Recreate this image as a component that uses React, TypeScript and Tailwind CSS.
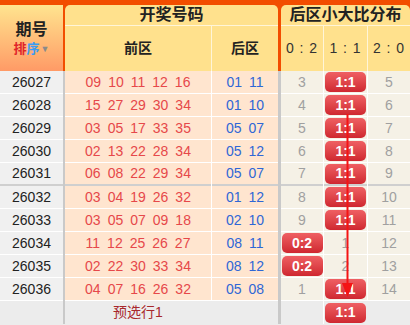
import React from 'react';

type Row = {
  issue: string;
  front: string[];
  back: string[];
  dist: (string | number)[];
};

const ROWS: Row[] = [
  { issue: '26027', front: ['09', '10', '11', '12', '16'], back: ['01', '11'], dist: [3, '1:1', 5] },
  { issue: '26028', front: ['15', '27', '29', '30', '34'], back: ['01', '10'], dist: [4, '1:1', 6] },
  { issue: '26029', front: ['03', '05', '17', '33', '35'], back: ['05', '07'], dist: [5, '1:1', 7] },
  { issue: '26030', front: ['02', '13', '22', '28', '34'], back: ['05', '12'], dist: [6, '1:1', 8] },
  { issue: '26031', front: ['06', '08', '22', '29', '34'], back: ['05', '07'], dist: [7, '1:1', 9] },
  { issue: '26032', front: ['03', '04', '19', '26', '32'], back: ['01', '12'], dist: [8, '1:1', 10] },
  { issue: '26033', front: ['03', '05', '07', '09', '18'], back: ['02', '10'], dist: [9, '1:1', 11] },
  { issue: '26034', front: ['11', '12', '25', '26', '27'], back: ['08', '11'], dist: ['0:2', 1, 12] },
  { issue: '26035', front: ['02', '22', '30', '33', '34'], back: ['08', '12'], dist: ['0:2', 2, 13] },
  { issue: '26036', front: ['04', '07', '16', '26', '32'], back: ['05', '08'], dist: [1, '1:1', 14] },
];

const Badge: React.FC<{ label: string }> = ({ label }) => (
  <div className="mx-auto flex h-[20px] w-[41px] items-center justify-center rounded-[5px] bg-linear-to-b from-[#ef5f63] to-[#cf2630] text-[14px] font-bold text-white">
    {label}
  </div>
);

const DistCell: React.FC<{ value: string | number; width: string; border: string }> = ({ value, width, border }) => (
  <div className={`${width} ${border} flex items-center justify-center bg-[#f5f1e6] text-[14px] text-[#a0a0a0]`}>
    {typeof value === 'string' ? <Badge label={value} /> : value}
  </div>
);

const App: React.FC = () => {
  return (
    <div
      className="relative h-[325px] w-[410px] overflow-hidden bg-[#ececec]"
      style={{ fontFamily: '"Liberation Sans", "Noto Sans CJK SC", sans-serif' }}
    >
      {/* header */}
      <div className="flex h-[71px] bg-[#f24d00] pt-[5px]">
        <div className="flex w-[63px] flex-col items-center justify-center bg-linear-to-b from-[#ffe48f] to-[#ff9a66] pt-[2px]">
          <div className="text-[16px] font-bold leading-[20px] text-[#222]">期号</div>
          <div className="flex items-center text-[13px] font-bold leading-[18px]">
            <span className="text-[#e0242a]">排</span>
            <span className="text-[#3a9cf5]">序</span>
            <span className="ml-[1px] text-[9px] text-[#8a8a8a]">▼</span>
          </div>
        </div>
        <div className="ml-[2px] flex w-[213px] flex-col rounded-t-[5px] bg-[#ffe18d]">
          <div className="flex h-[20px] items-center justify-center text-[16px] font-bold text-[#222]">开奖号码</div>
          <div className="h-px bg-[#fff5d8]" />
          <div className="flex flex-1">
            <div className="flex w-[146px] items-center justify-center text-[14px] font-bold text-[#222]">前区</div>
            <div className="w-px bg-[#fff5d8]" />
            <div className="flex flex-1 items-center justify-center text-[14px] font-bold text-[#222]">后区</div>
          </div>
        </div>
        <div className="ml-[3px] flex w-[129px] flex-col rounded-t-[5px] bg-[#ffe18d]">
          <div className="flex h-[20px] items-center justify-center whitespace-nowrap text-[16px] font-bold text-[#222]">后区小大比分布</div>
          <div className="h-px bg-[#fff5d8]" />
          <div className="flex flex-1 text-[14px] tracking-[1px] text-[#333]">
            <div className="flex w-[42px] items-center justify-center">0 : 2</div>
            <div className="w-px bg-[#fff5d8]" />
            <div className="flex w-[43px] items-center justify-center">1 : 1</div>
            <div className="w-px bg-[#fff5d8]" />
            <div className="flex flex-1 items-center justify-center">2 : 0</div>
          </div>
        </div>
      </div>

      {/* rows */}
      {ROWS.map((r, i) => {
        const sep = i === 4 ? 'border-b-2 border-[#cfcfcf]' : 'border-b border-white';
        return (
          <div key={r.issue} className="flex">
            <div className={`flex h-[23px] w-[63px] items-center justify-center bg-[#f0f0f0] text-[14px] text-[#222] ${sep}`}>
              {r.issue}
            </div>
            <div className="w-[2px] bg-[#c9c9c9]" />
            <div className={`flex h-[23px] w-[146px] items-center justify-center gap-[7px] bg-[#ffe5cf] text-[14px] text-[#e6484a] ${sep}`}>
              {r.front.map((n, k) => <span key={k}>{n}</span>)}
            </div>
            <div className="w-px bg-white" />
            <div className={`flex h-[23px] w-[66px] items-center justify-center gap-[7px] bg-[#ffe5cf] text-[14px] text-[#2f67d6] ${sep}`}>
              {r.back.map((n, k) => <span key={k}>{n}</span>)}
            </div>
            <div className="w-[3px] bg-[#c9c9c9]" />
            <DistCell value={r.dist[0]} width="w-[42px] h-[23px]" border={sep} />
            <div className="w-px bg-white" />
            <DistCell value={r.dist[1]} width="w-[43px] h-[23px]" border={sep} />
            <div className="w-px bg-white" />
            <DistCell value={r.dist[2]} width="w-[42px] h-[23px]" border={sep} />
          </div>
        );
      })}

      {/* footer */}
      <div className="flex h-[23px]">
        <div className="w-[63px] bg-[#ececec]" />
        <div className="w-[2px] bg-[#c9c9c9]" />
        <div className="flex w-[146px] items-center justify-center bg-[#ececec] text-[14px] text-[#a8282c]">预选行1</div>
        <div className="w-px bg-[#ececec]" />
        <div className="w-[66px] bg-[#ececec]" />
        <div className="w-[3px] bg-[#c9c9c9]" />
        <div className="w-[42px]" />
        <div className="w-px bg-white" />
        <div className="flex w-[43px] items-center justify-center">
          <Badge label="1:1" />
        </div>
      </div>

      {/* trend line */}
      <svg className="pointer-events-none absolute left-0 top-0" width="410" height="325" viewBox="0 0 410 325">
        <line x1="347.5" y1="114" x2="347.5" y2="286" stroke="#f41414" strokeWidth="2" />
        <polygon points="342,283 353,283 347.5,297" fill="#f41414" />
      </svg>
    </div>
  );
};

export default App;
